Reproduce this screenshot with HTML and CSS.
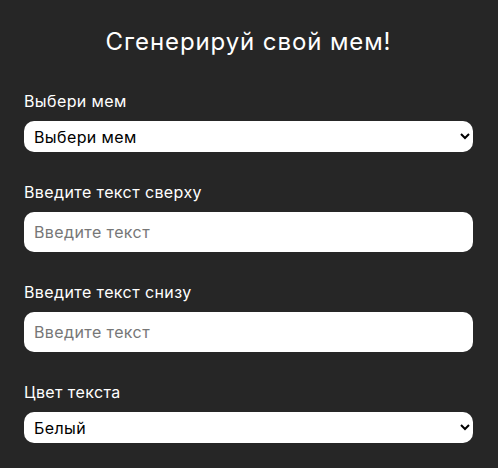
FILE: index.html
```html
<!DOCTYPE html>
<html lang="ru">
<head>
<meta charset="utf-8">
<title>Мем генератор</title>
<link rel="stylesheet" href="styles.css">
</head>
<body>
<main class="app">
  <h1 class="title">Сгенерируй свой мем!</h1>
  <form class="form">
    <div class="field">
      <label class="label" for="meme">Выбери мем</label>
      <select class="control select" id="meme">
        <option>Выбери мем</option>
      </select>
    </div>
    <div class="field">
      <label class="label" for="top">Введите текст сверху</label>
      <input class="control input" id="top" type="text" placeholder="Введите текст">
    </div>
    <div class="field">
      <label class="label" for="bottom">Введите текст снизу</label>
      <input class="control input" id="bottom" type="text" placeholder="Введите текст">
    </div>
    <div class="field">
      <label class="label" for="color">Цвет текста</label>
      <select class="control select" id="color">
        <option>Белый</option>
      </select>
    </div>
  </form>
</main>
</body>
</html>
```
FILE: styles.css
```css
html, body {
  margin: 0;
  padding: 0;
  background: #262626;
}
body {
  font-family: Inter, "Noto Sans", sans-serif;
  color: #fff;
}
.app {
  padding: 0 25px 24px 24px;
}
.title {
  margin: 0;
  padding-top: 26px;
  font-size: 24px;
  font-weight: 400;
  line-height: 32px;
  letter-spacing: 0.9px;
  text-align: center;
}
.form {
  display: flex;
  flex-direction: column;
  gap: 30px;
  margin-top: 33px;
}
.field {
  display: flex;
  flex-direction: column;
  gap: 10px;
}
.label {
  font-size: 16px;
  line-height: 20px;
  letter-spacing: 0.4px;
}
.control {
  box-sizing: border-box;
  width: 100%;
  border: none;
  border-radius: 10px;
  background: #fff;
  font-family: Inter, "Noto Sans", sans-serif;
  font-size: 16px;
  font-weight: 400;
  letter-spacing: 0.4px;
  color: #000;
  outline: none;
}
.select {
  height: 31px;
  padding: 0 6px;
}
.input {
  height: 40px;
  padding: 0 10px;
}
.input::placeholder {
  color: #777;
}
```
